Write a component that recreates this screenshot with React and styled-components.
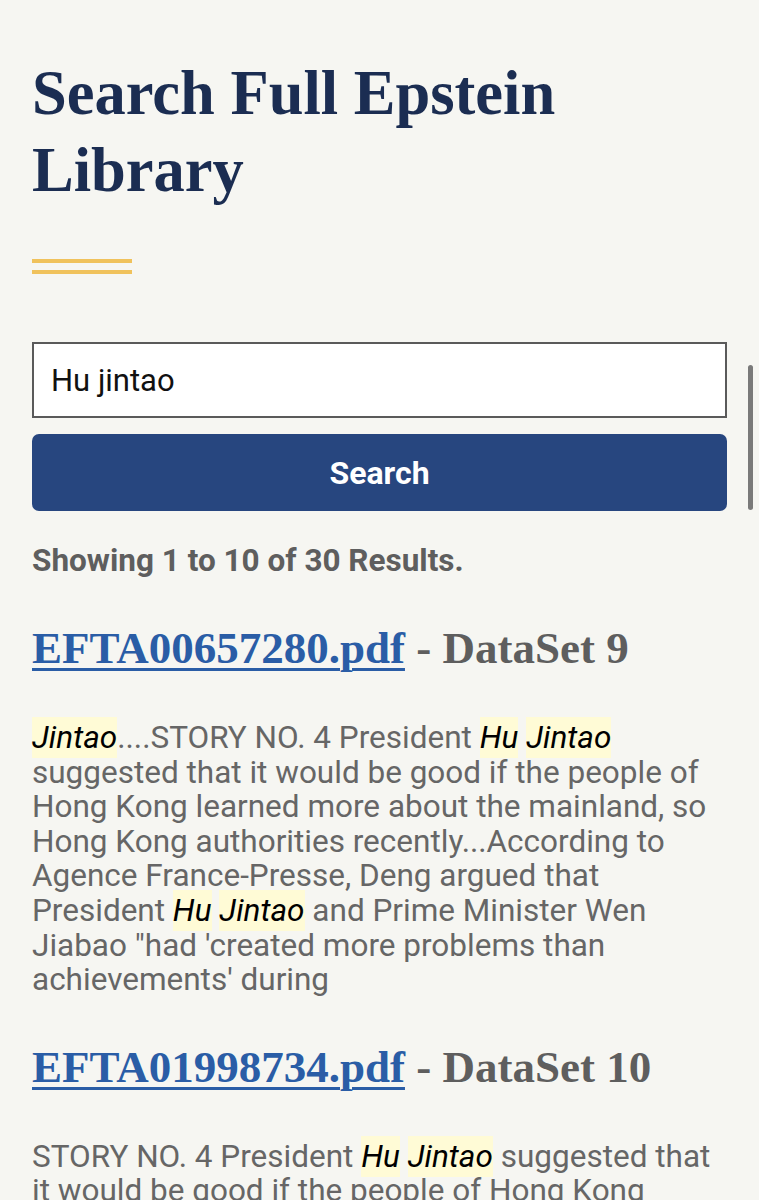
import styled, { createGlobalStyle } from "styled-components";

const GlobalStyle = createGlobalStyle`
  html, body {
    margin: 0;
    padding: 0;
    background: #f6f6f2;
  }
  body {
    font-family: Roboto, "Liberation Sans", sans-serif;
  }
`;

const Page = styled.div`
  position: relative;
  min-height: 1200px;
  padding: 55px 32px 0 32px;
  box-sizing: border-box;
  overflow: hidden;
`;

const Title = styled.h1`
  margin: 0;
  font-family: "Liberation Serif", serif;
  font-weight: 700;
  font-size: 62.5px;
  line-height: 77px;
  color: #1b2d52;
`;

const Rule = styled.div`
  margin-top: 50px;
  width: 100px;
  height: 15px;
  border-top: 4px solid #f0c25c;
  border-bottom: 4px solid #f0c25c;
  box-sizing: border-box;
`;

const Form = styled.form`
  margin-top: 68px;
  display: flex;
  flex-direction: column;
  gap: 16px;
`;

const Input = styled.input`
  height: 76px;
  box-sizing: border-box;
  border: 2px solid #5a5a5a;
  background: #fff;
  padding: 0 17px;
  font-family: Roboto, "Liberation Sans", sans-serif;
  font-size: 31px;
  color: #111;
  outline: none;
  border-radius: 0;
`;

const Button = styled.button`
  height: 77px;
  border: none;
  border-radius: 7px;
  background: #27467f;
  color: #fff;
  font-family: Roboto, "Liberation Sans", sans-serif;
  font-weight: 700;
  font-size: 32px;
`;

const Count = styled.p`
  margin: 31px 0 0 0;
  font-weight: 700;
  font-size: 31.5px;
  line-height: 38px;
  color: #5e5e5e;
`;

const ResultTitle = styled.h3`
  margin: ${(p) => p.$top}px 0 0 0;
  font-family: "Liberation Serif", serif;
  font-weight: 700;
  font-size: 45px;
  line-height: 52px;
  color: #5e5e5e;
`;

const FileLink = styled.a`
  color: #2a5da6;
  text-decoration: underline;
  text-decoration-thickness: 3px;
  text-underline-offset: 5px;
`;

const Snippet = styled.p`
  margin: 47px 0 0 0;
  font-size: 31.5px;
  line-height: 34.6px;
  color: #666;
`;

const Mark = styled.mark`
  background: #fffbd6;
  color: #000;
  font-style: italic;
  padding: 2px 0;
`;

const ScrollThumb = styled.div`
  position: absolute;
  right: 6px;
  top: 365px;
  width: 5px;
  height: 145px;
  border-radius: 3px;
  background: #7a7a7a;
`;

const results = [
  {
    file: "EFTA00657280.pdf",
    set: "DataSet 9",
    top: 42,
    parts: [
      ["m", "Jintao"],
      ["t", "....STORY NO. 4 President "],
      ["m", "Hu"],
      ["t", " "],
      ["m", "Jintao"],
      [
        "t",
        " suggested that it would be good if the people of Hong Kong learned more about the mainland, so Hong Kong authorities recently...According to Agence France-Presse, Deng argued that President ",
      ],
      ["m", "Hu"],
      ["t", " "],
      ["m", "Jintao"],
      [
        "t",
        " and Prime Minister Wen Jiabao \"had 'created more problems than achievements' during",
      ],
    ],
  },
  {
    file: "EFTA01998734.pdf",
    set: "DataSet 10",
    top: 43,
    parts: [
      ["t", "STORY NO. 4 President "],
      ["m", "Hu"],
      ["t", " "],
      ["m", "Jintao"],
      [
        "t",
        " suggested that it would be good if the people of Hong Kong learned more about the mainland, so Hong Kong authorities recently",
      ],
    ],
  },
];

const App = () => {
  return (
    <>
      <GlobalStyle />
      <Page>
        <Title>Search Full Epstein Library</Title>
        <Rule />
        <Form onSubmit={(e) => e.preventDefault()}>
          <Input defaultValue="Hu jintao" />
          <Button type="submit">Search</Button>
        </Form>
        <Count>Showing 1 to 10 of 30 Results.</Count>
        {results.map((r) => (
          <div key={r.file}>
            <ResultTitle $top={r.top}>
              <FileLink href="#">{r.file}</FileLink> - {r.set}
            </ResultTitle>
            <Snippet>
              {r.parts.map(([kind, text], i) =>
                kind === "m" ? <Mark key={i}>{text}</Mark> : <span key={i}>{text}</span>
              )}
            </Snippet>
          </div>
        ))}
        <ScrollThumb />
      </Page>
    </>
  );
};

export default App;
